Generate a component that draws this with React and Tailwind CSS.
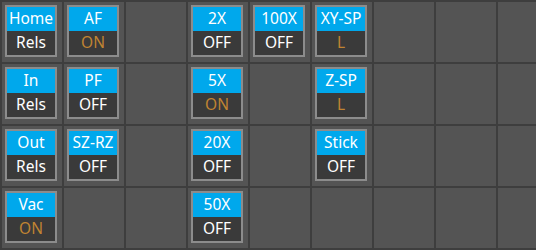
import React from 'react'

// column -> row -> button ({ top, bottom, warm })
const cells = {
  0: [
    { top: 'Home', bottom: 'Rels' },
    { top: 'In', bottom: 'Rels' },
    { top: 'Out', bottom: 'Rels' },
    { top: 'Vac', bottom: 'ON', warm: true },
  ],
  1: [
    { top: 'AF', bottom: 'ON', warm: true },
    { top: 'PF', bottom: 'OFF' },
    { top: 'SZ-RZ', bottom: 'OFF' },
    null,
  ],
  3: [
    { top: '2X', bottom: 'OFF' },
    { top: '5X', bottom: 'ON', warm: true },
    { top: '20X', bottom: 'OFF' },
    { top: '50X', bottom: 'OFF' },
  ],
  4: [{ top: '100X', bottom: 'OFF' }, null, null, null],
  5: [
    { top: 'XY-SP', bottom: 'L', warm: true },
    { top: 'Z-SP', bottom: 'L', warm: true },
    { top: 'Stick', bottom: 'OFF' },
    null,
  ],
}

function Toggle({ top, bottom, warm }) {
  return (
    <div className="w-[52px] h-[52px] border-2 border-[#8c8c8c] flex flex-col">
      <div className="h-[24px] bg-[#00a8ec] text-white flex items-center justify-center leading-none">
        {top}
      </div>
      <div
        className={`flex-1 bg-[#3a3a3a] flex items-center justify-center leading-none ${
          warm ? 'text-[#c08432]' : 'text-white'
        }`}
      >
        {bottom}
      </div>
    </div>
  )
}

export default function App() {
  const rows = [0, 1, 2, 3]
  const cols = [0, 1, 2, 3, 4, 5, 6, 7, 8]
  return (
    <div
      className="w-[536px] h-[250px] overflow-hidden bg-[#3e3e3e] text-[15.5px]"
      style={{ fontFamily: '"Noto Sans", "Open Sans", sans-serif' }}
    >
      <div className="grid grid-cols-[repeat(9,62px)] grid-rows-[repeat(4,62px)] border-b-2 border-[#3e3e3e] w-max">
        {rows.map((r) =>
          cols.map((c) => {
            const btn = cells[c]?.[r]
            return (
              <div
                key={`${r}-${c}`}
                className="border-t-2 border-l-2 border-[#3e3e3e] bg-[#545454] p-[3px]"
              >
                {btn && <Toggle {...btn} />}
              </div>
            )
          })
        )}
      </div>
    </div>
  )
}
